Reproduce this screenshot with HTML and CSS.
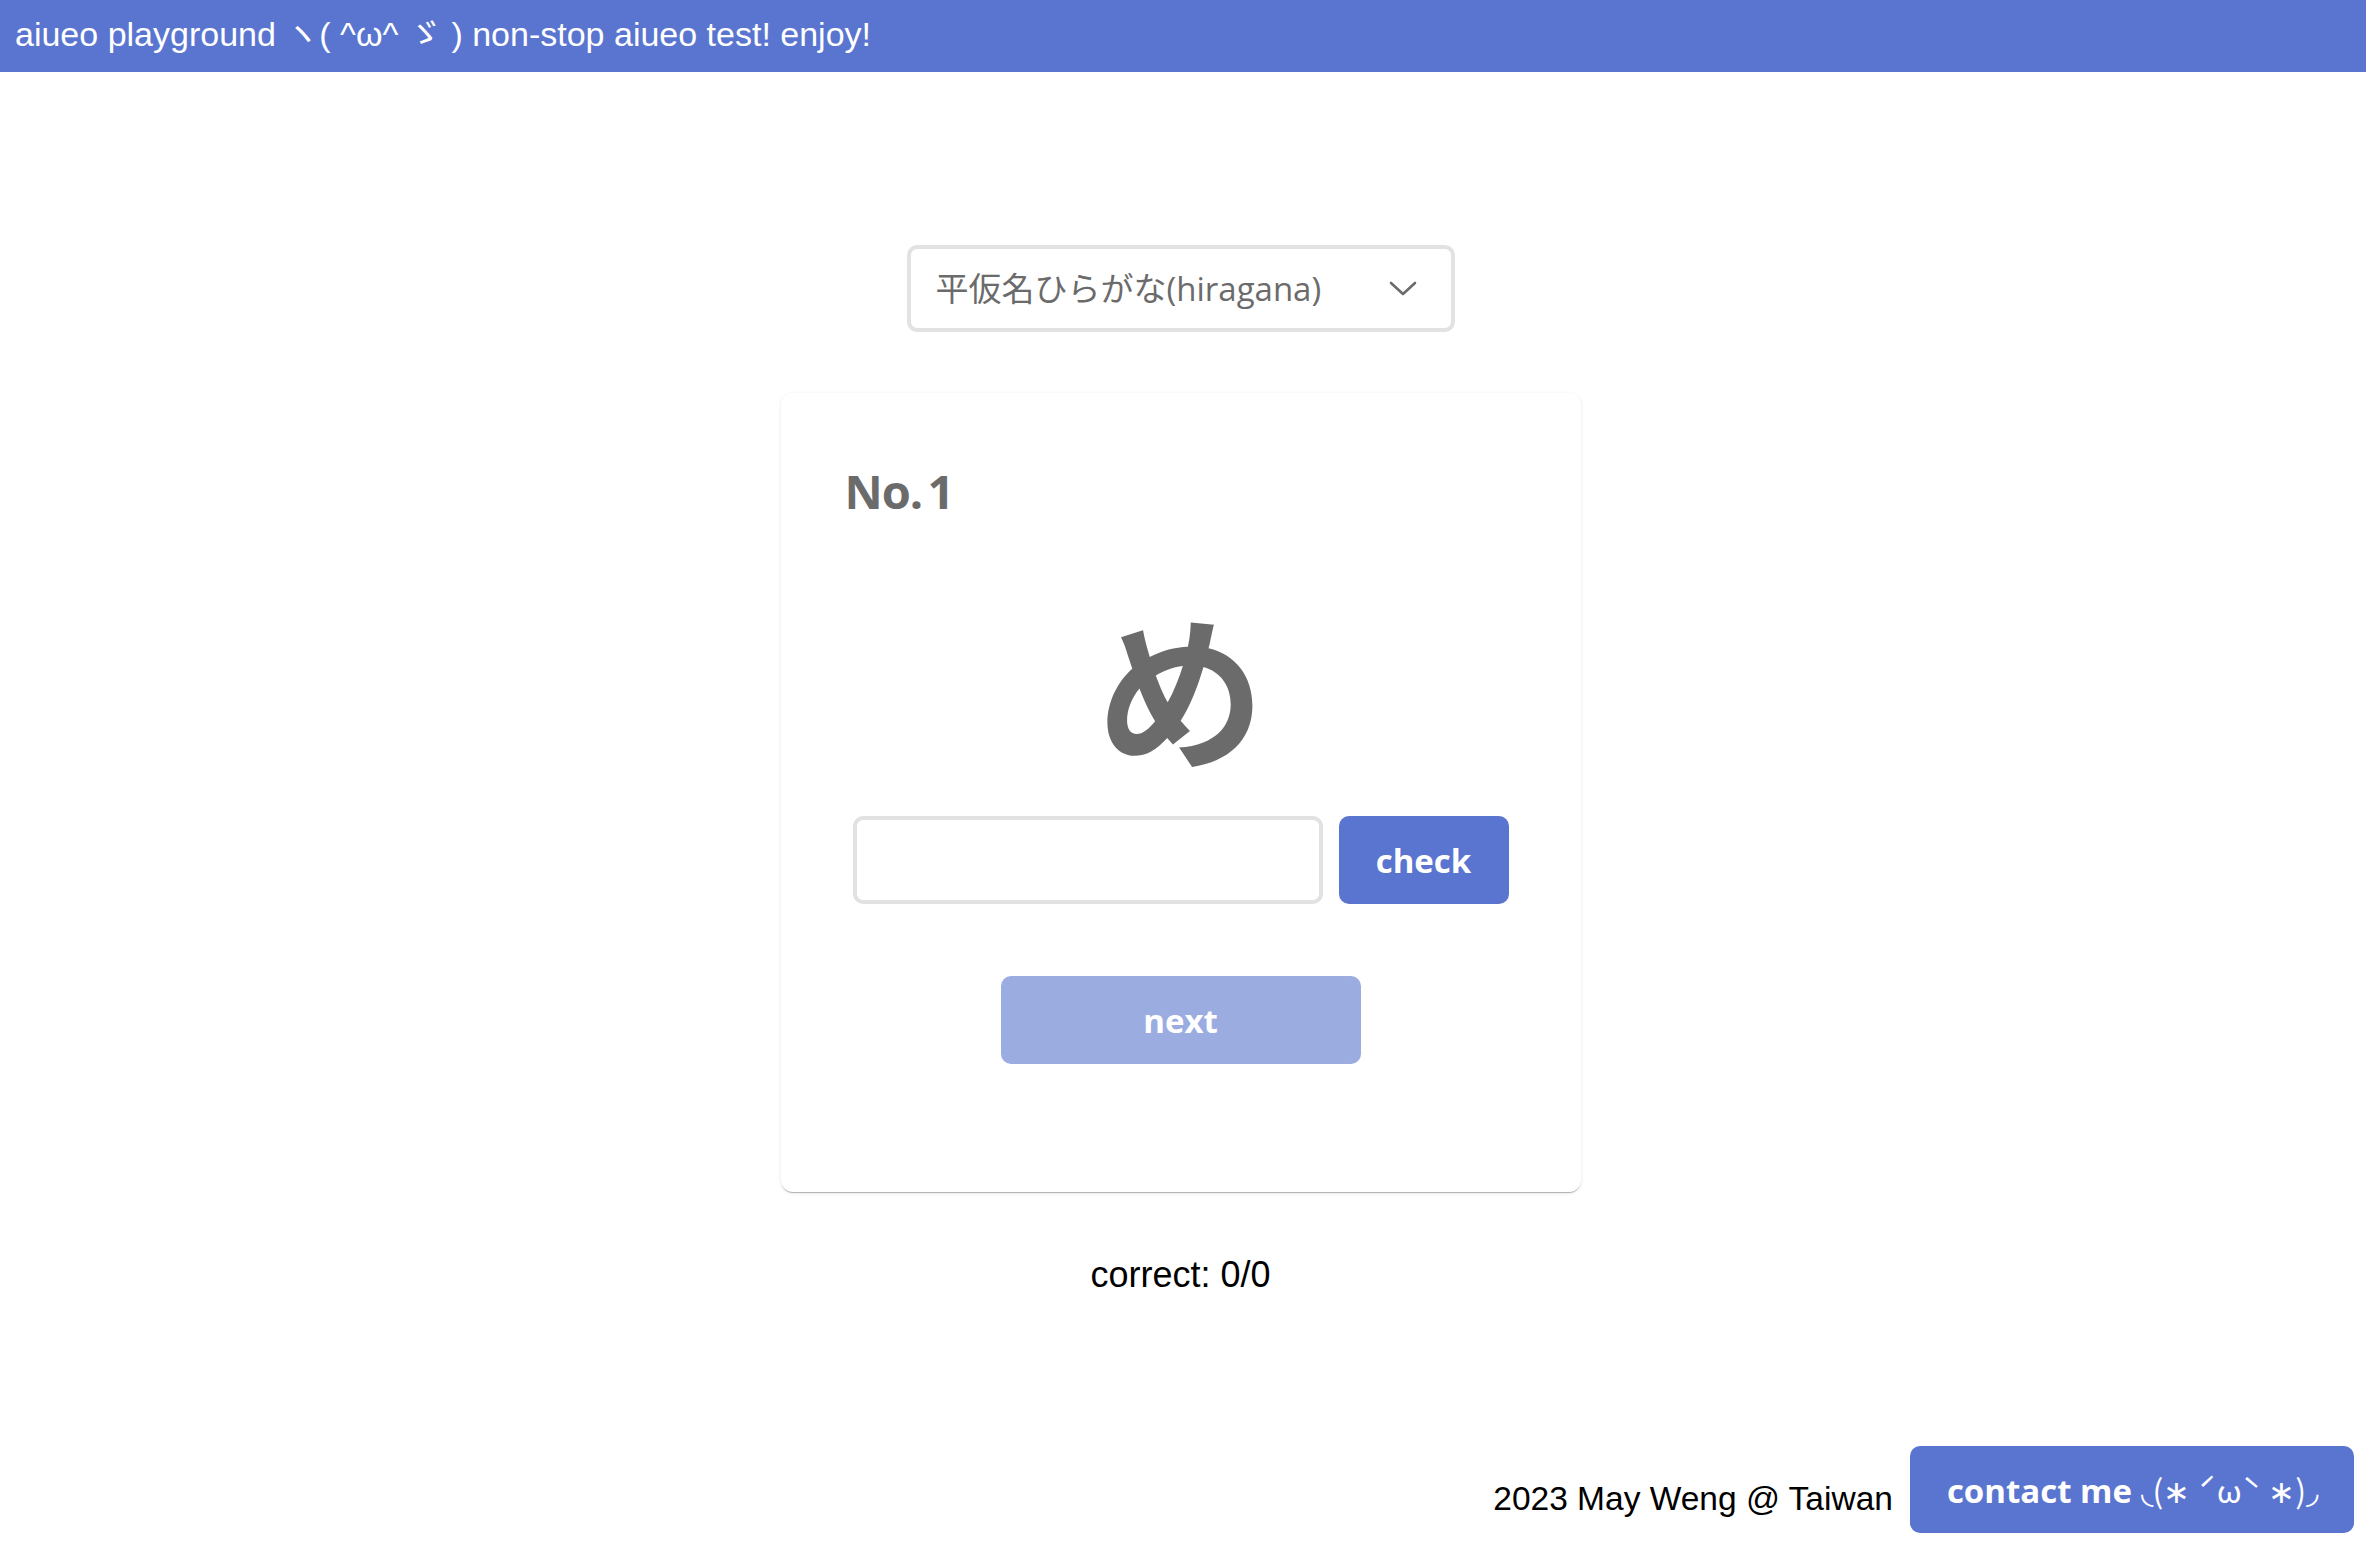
FILE: index.html
```
<!DOCTYPE html>
<html lang="ja">
<head>
<meta charset="utf-8">
<title>aiueo playground</title>
<link rel="stylesheet" href="styles.css">
</head>
<body>
<header class="topbar">aiueo playground ヽ( ^ω^ ゞ ) non-stop aiueo test! enjoy!</header>
<main class="main">
  <div class="select">
    <span class="select-text">平仮名ひらがな(hiragana)</span>
    <svg class="chevron" width="28" height="16" viewBox="0 0 28 16"><polyline points="2,2 14,13 26,2" fill="none" stroke="#6b6b6b" stroke-width="2.6" stroke-linecap="round" stroke-linejoin="round"/></svg>
  </div>
  <section class="card">
    <h2 class="card-title">No. 1</h2>
    <div class="kana">め</div>
    <div class="answer-row">
      <input class="answer" type="text">
      <button class="btn btn-check">check</button>
    </div>
    <button class="btn btn-next">next</button>
  </section>
  <p class="score">correct: 0/0</p>
</main>
<footer class="footer">
  <span class="credit">2023 May Weng @ Taiwan</span>
  <button class="btn btn-contact">contact me <span class="kaomoji">◟(∗ ˊωˋ ∗)◞</span></button>
</footer>
</body>
</html>
```
FILE: styles.css
```
html, body {
  margin: 0;
  padding: 0;
}
body {
  min-height: 100vh;
  display: flex;
  flex-direction: column;
  background: #ffffff;
  font-family: "Liberation Sans", Arial, "Noto Sans CJK JP", sans-serif;
  color: #000;
}
.topbar {
  height: 72px;
  box-sizing: border-box;
  background: #5a75cf;
  color: #fff;
  font-size: 34px;
  display: flex;
  align-items: center;
  padding: 0 0 10px 15px;
  white-space: nowrap;
}
.main {
  display: flex;
  flex-direction: column;
  align-items: center;
  padding-top: 173px;
  padding-right: 5px;
}
.select {
  width: 548px;
  height: 87px;
  box-sizing: border-box;
  border: 4px solid #e2e2e2;
  border-radius: 10px;
  display: flex;
  align-items: center;
  justify-content: space-between;
  padding: 0 34px 0 25px;
  color: #6b6b6b;
  font-family: "Open Sans", "Noto Sans CJK JP", sans-serif;
  font-size: 33px;
}
.select-text {
  line-height: 1;
}
.card {
  margin-top: 61px;
  width: 800px;
  box-sizing: border-box;
  padding: 75px 64px 128px 64px;
  border-radius: 12px;
  background: #fff;
  box-shadow: 0 2px 1px -1px rgba(0,0,0,0.2), 0 1px 1px 0 rgba(0,0,0,0.10), 0 1px 4px 0 rgba(0,0,0,0.08);
  display: flex;
  flex-direction: column;
}
.card-title {
  margin: 0;
  font-family: "Open Sans", sans-serif;
  font-weight: 700;
  font-size: 47px;
  line-height: 1;
  color: #6b6b6b;
  letter-spacing: -1px;
  word-spacing: -6px;
}
.kana {
  margin-top: 85px;
  text-align: center;
  font-family: "Noto Sans CJK JP", sans-serif;
  font-weight: 700;
  font-size: 168px;
  line-height: 1;
  color: #6b6b6b;
}
.answer-row {
  margin-top: 48px;
  display: flex;
  justify-content: center;
  gap: 16px;
}
.answer {
  width: 470px;
  height: 88px;
  box-sizing: border-box;
  border: 4px solid #e2e2e2;
  border-radius: 10px;
  outline: none;
  font-size: 33px;
  padding: 0 16px;
}
.btn {
  border: none;
  border-radius: 10px;
  color: #fff;
  font-family: "Open Sans", sans-serif;
  font-weight: 700;
  font-size: 33px;
  cursor: pointer;
  padding: 0;
}
.btn-check {
  width: 170px;
  height: 88px;
  background: #5a75cf;
}
.btn-next {
  margin-top: 72px;
  align-self: center;
  width: 360px;
  height: 88px;
  background: #9badE0;
}
.score {
  margin: 62px 0 0 0;
  font-size: 36px;
  line-height: 42px;
}
.footer {
  margin-top: auto;
  display: flex;
  justify-content: flex-end;
  align-items: center;
  gap: 17px;
  padding: 0 12px 11px 0;
}
.credit {
  font-size: 33.5px;
  padding-top: 19px;
}
.btn-contact {
  height: 87px;
  padding: 0 36px 0 37px;
  background: #5a75cf;
  white-space: nowrap;
}
.kaomoji {
  font-family: "Noto Sans CJK JP", sans-serif;
  font-weight: 400;
  font-size: 32px;
}
```
